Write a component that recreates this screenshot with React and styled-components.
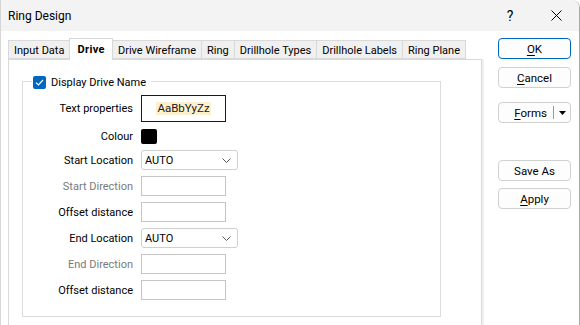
import React from "react";
import styled, { createGlobalStyle } from "styled-components";

const GlobalStyle = createGlobalStyle`
  html, body { margin: 0; padding: 0; background: #ffffff; }
  body { font-family: Roboto, "Noto Sans", "Liberation Sans", sans-serif; font-size: 11px; color: #000; }
  * { box-sizing: border-box; }
`;

const Window = styled.div`
  width: 580px;
  height: 325px;
  display: flex;
  flex-direction: column;
  background: #ffffff;
  border-right: 1px solid #a9a9a9;
  border-left: 1px solid #d6d6d6;
  border-top-right-radius: 8px;
  overflow: hidden;
`;

const TitleBar = styled.div`
  height: 31px;
  flex: none;
  display: flex;
  align-items: center;
  background: #f3f3f3;
  padding-left: 7px;
`;

const Title = styled.div`
  font-size: 12px;
  flex: 1;
  color: #000;
`;

const TitleButton = styled.div`
  width: 46px;
  height: 31px;
  display: flex;
  align-items: center;
  justify-content: center;
  font-size: 14px;
  color: #000;
`;

const Body = styled.div`
  flex: 1;
  display: flex;
  min-height: 0;
`;

const LeftArea = styled.div`
  width: 481px;
  padding-left: 7px;
  display: flex;
  flex-direction: column;
`;

const TabStrip = styled.div`
  margin-top: 7px;
  height: 21px;
  display: flex;
  align-items: flex-end;
  position: relative;
  z-index: 1;
`;

const Tab = styled.div`
  height: ${(p) => (p.$active ? "22px" : "19px")};
  margin-bottom: ${(p) => (p.$active ? "-1px" : "0")};
  padding: 0 ${(p) => (p.$active ? "7px" : "5px")};
  margin-left: ${(p) => (p.$first ? "0" : "-1px")};
  display: flex;
  align-items: center;
  justify-content: center;
  border: 1px solid #d9d9d9;
  border-bottom: ${(p) => (p.$active ? "none" : "1px solid #d9d9d9")};
  background: ${(p) => (p.$active ? "#ffffff" : "#f0f0f0")};
  font-weight: ${(p) => (p.$active ? 700 : 400)};
  letter-spacing: ${(p) => (p.$active ? "0.4px" : "0")};
  padding-top: ${(p) => (p.$active ? "0" : "1px")};
  position: relative;
  z-index: ${(p) => (p.$active ? 2 : 1)};
  white-space: nowrap;
  color: #000;
`;

const Panel = styled.div`
  flex: 1;
  border: 1px solid #d9d9d9;
  border-bottom: none;
  box-shadow: 2px 0 0 #f0f0f0;
  padding: 21px 0 0 13px;
  background: #fff;
`;

const GroupBox = styled.div`
  width: 419px;
  height: 236px;
  border: 1px solid #dcdcdc;
  position: relative;
  padding-top: 13px;
`;

const Legend = styled.div`
  position: absolute;
  top: -7px;
  left: 9px;
  height: 14px;
  padding: 0 5px 0 1px;
  background: #fff;
  display: flex;
  align-items: center;
  gap: 5px;
`;

const CheckBox = styled.div`
  width: 13px;
  height: 13px;
  border-radius: 2px;
  background: #0067c0;
  display: flex;
  align-items: center;
  justify-content: center;
`;

const FormGrid = styled.div`
  display: grid;
  grid-template-columns: 110px auto;
  column-gap: 8px;
  row-gap: 6px;
  grid-auto-rows: 20px;
  grid-template-rows: 27px 16px;
  align-items: center;
  justify-items: start;
`;

const Label = styled.div`
  justify-self: end;
  color: ${(p) => (p.$disabled ? "#7a7a7a" : "#000")};
  white-space: nowrap;
`;

const FontBox = styled.div`
  width: 85px;
  height: 27px;
  border: 1px solid #1a1a1a;
  display: flex;
  align-items: center;
  justify-content: center;
`;

const FontSample = styled.span`
  background: #fdf0cc;
  font-size: 11.5px;
  line-height: 13px;
  padding: 0 1px;
  color: #1a1a1a;
`;

const Swatch = styled.div`
  width: 16px;
  height: 15px;
  background: #000;
  border-radius: 2px;
`;

const Select = styled.div`
  width: 97px;
  height: 20px;
  border: 1px solid #cfcfcf;
  border-radius: 3px;
  display: flex;
  align-items: center;
  justify-content: space-between;
  padding: 0 6px 0 3px;
  background: #fff;
`;

const TextInput = styled.div`
  width: 85px;
  height: 20px;
  border: 1px solid #c4c4c4;
  background: #fff;
`;

const ButtonColumn = styled.div`
  padding-left: 16px;
  display: flex;
  flex-direction: column;
`;

const Button = styled.div`
  width: 73px;
  height: 21px;
  margin-top: ${(p) => p.$gap}px;
  border: 1px solid ${(p) => (p.$primary ? "#0067c0" : "#d0d0d0")};
  border-radius: 4px;
  background: #fdfdfd;
  display: flex;
  align-items: center;
  justify-content: center;
  color: #000;
  font-size: 11.5px;
  position: relative;
`;

const SplitButton = styled(Button)`
  justify-content: flex-end;
  padding-right: 0;
`;

const SplitText = styled.span`
  padding-right: 6px;
`;

const SplitDivider = styled.span`
  width: 1px;
  height: 13px;
  background: #9a9a9a;
`;

const SplitArrow = styled.span`
  width: 16px;
  display: flex;
  align-items: center;
  justify-content: center;
`;

const U = styled.span`
  text-decoration: underline;
  text-underline-offset: 2px;
`;

const Chevron = () => (
  <svg width="9" height="5" viewBox="0 0 9 5">
    <path d="M0.5 0.5 L4.5 4.5 L8.5 0.5" fill="none" stroke="#555" strokeWidth="1" />
  </svg>
);

const Check = () => (
  <svg width="9" height="7" viewBox="0 0 9 7">
    <path d="M1 3.6 L3.4 6 L8 1" fill="none" stroke="#fff" strokeWidth="1.2" />
  </svg>
);

const CloseIcon = () => (
  <svg width="11" height="11" viewBox="0 0 11 11">
    <path d="M0.5 0.5 L10.5 10.5 M10.5 0.5 L0.5 10.5" stroke="#000" strokeWidth="1" />
  </svg>
);

const tabs = ["Input Data", "Drive", "Drive Wireframe", "Ring", "Drillhole Types", "Drillhole Labels", "Ring Plane"];

export default function App() {
  return (
    <>
      <GlobalStyle />
      <Window>
        <TitleBar>
          <Title>Ring Design</Title>
          <TitleButton>?</TitleButton>
          <TitleButton>
            <CloseIcon />
          </TitleButton>
        </TitleBar>
        <Body>
          <LeftArea>
            <TabStrip>
              {tabs.map((t, i) => (
                <Tab key={t} $first={i === 0} $active={t === "Drive"}>
                  {t}
                </Tab>
              ))}
            </TabStrip>
            <Panel>
              <GroupBox>
                <Legend>
                  <CheckBox>
                    <Check />
                  </CheckBox>
                  <span>Display Drive Name</span>
                </Legend>
                <FormGrid>
                  <Label>Text properties</Label>
                  <FontBox>
                    <FontSample>AaBbYyZz</FontSample>
                  </FontBox>
                  <Label>Colour</Label>
                  <Swatch />
                  <Label>Start Location</Label>
                  <Select>
                    <span>AUTO</span>
                    <Chevron />
                  </Select>
                  <Label $disabled>Start Direction</Label>
                  <TextInput />
                  <Label>Offset distance</Label>
                  <TextInput />
                  <Label>End Location</Label>
                  <Select>
                    <span>AUTO</span>
                    <Chevron />
                  </Select>
                  <Label $disabled>End Direction</Label>
                  <TextInput />
                  <Label>Offset distance</Label>
                  <TextInput />
                </FormGrid>
              </GroupBox>
            </Panel>
          </LeftArea>
          <ButtonColumn>
            <Button $primary $gap={7}>
              <U>O</U>K
            </Button>
            <Button $gap={8}>
              <U>C</U>ancel
            </Button>
            <SplitButton $gap={14}>
              <SplitText>
                <U>F</U>orms
              </SplitText>
              <SplitDivider />
              <SplitArrow>
                <svg width="7" height="4" viewBox="0 0 7 4">
                  <path d="M0 0 H7 L3.5 4 Z" fill="#000" />
                </svg>
              </SplitArrow>
            </SplitButton>
            <Button $gap={37}>Save As</Button>
            <Button $gap={7}>
              <U>A</U>pply
            </Button>
          </ButtonColumn>
        </Body>
      </Window>
    </>
  );
}
